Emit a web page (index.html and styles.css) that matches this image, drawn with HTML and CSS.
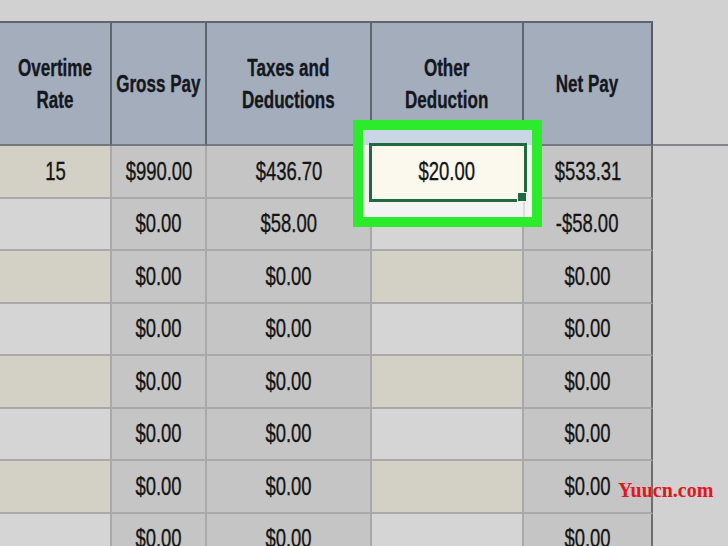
FILE: index.html
```html
<!DOCTYPE html>
<html lang="en">
<head>
<meta charset="utf-8">
<title>Payroll sheet</title>
<link rel="stylesheet" href="styles.css">
</head>
<body>
<div class="page">
  <div class="sheet">
    <div class="hd"><span class="t">Overtime<br>Rate</span></div>
    <div class="hd"><span class="t">Gross Pay</span></div>
    <div class="hd"><span class="t">Taxes and<br>Deductions</span></div>
    <div class="hd"><span class="t">Other<br>Deduction</span></div>
    <div class="hd hd-last"><span class="t">Net Pay</span></div>
    <div class="hd-fill"></div>

    <div class="c alt"><span class="t">15</span></div>
    <div class="c g"><span class="t">$990.00</span></div>
    <div class="c g"><span class="t">$436.70</span></div>
    <div class="c sel"><span class="t">$20.00</span></div>
    <div class="c g last"><span class="t">$533.31</span></div>
    <div class="fill"></div>

    <div class="c lt"></div>
    <div class="c g"><span class="t">$0.00</span></div>
    <div class="c g"><span class="t">$58.00</span></div>
    <div class="c lt"></div>
    <div class="c g last"><span class="t">-$58.00</span></div>
    <div class="fill"></div>

    <div class="c alt"></div>
    <div class="c g"><span class="t">$0.00</span></div>
    <div class="c g"><span class="t">$0.00</span></div>
    <div class="c alt"></div>
    <div class="c g last"><span class="t">$0.00</span></div>
    <div class="fill"></div>

    <div class="c lt"></div>
    <div class="c g"><span class="t">$0.00</span></div>
    <div class="c g"><span class="t">$0.00</span></div>
    <div class="c lt"></div>
    <div class="c g last"><span class="t">$0.00</span></div>
    <div class="fill"></div>

    <div class="c alt"></div>
    <div class="c g"><span class="t">$0.00</span></div>
    <div class="c g"><span class="t">$0.00</span></div>
    <div class="c alt"></div>
    <div class="c g last"><span class="t">$0.00</span></div>
    <div class="fill"></div>

    <div class="c lt"></div>
    <div class="c g"><span class="t">$0.00</span></div>
    <div class="c g"><span class="t">$0.00</span></div>
    <div class="c lt"></div>
    <div class="c g last"><span class="t">$0.00</span></div>
    <div class="fill"></div>

    <div class="c alt"></div>
    <div class="c g"><span class="t">$0.00</span></div>
    <div class="c g"><span class="t">$0.00</span></div>
    <div class="c alt"></div>
    <div class="c g last"><span class="t">$0.00</span></div>
    <div class="fill"></div>

    <div class="c lt"></div>
    <div class="c g"><span class="t">$0.00</span></div>
    <div class="c g"><span class="t">$0.00</span></div>
    <div class="c lt"></div>
    <div class="c g last"><span class="t">$0.00</span></div>
    <div class="fill"></div>
  </div>
  <div class="spot"></div>
  <div class="mark">Yuucn.com</div>
</div>
</body>
</html>
```

FILE: styles.css
```css
* { box-sizing: border-box; }
html, body {
  margin: 0;
  padding: 0;
  background: #d1d1d1;
}
body {
  width: 728px;
  height: 546px;
  overflow: hidden;
  font-family: "Liberation Sans", Arial, sans-serif;
  color: #141414;
}
.page {
  position: relative;
  padding-top: 21px;
  height: 546px;
  overflow: hidden;
}
.sheet {
  display: grid;
  grid-template-columns: 112px 95px 165px 152px 129px 1fr;
  grid-template-rows: 125px repeat(8, 52.5px);
}
.t {
  display: inline-block;
  transform: scaleX(0.71);
  transform-origin: center;
  white-space: nowrap;
  -webkit-text-stroke: 0.35px currentColor;
}
.hd {
  background: #a3adbc;
  border-top: 2px solid #5f6670;
  border-right: 2px solid #5f6670;
  border-bottom: 2px solid #747980;
  display: flex;
  align-items: center;
  justify-content: center;
  text-align: center;
  font-weight: bold;
  font-size: 24px;
  line-height: 32px;
  color: #14171d;
}
.hd-last { border-right-color: #5a5e64; }
.hd-fill {
  border-bottom: 2px solid #85878a;
}
.c {
  display: flex;
  align-items: center;
  justify-content: center;
  font-size: 26px;
  border-right: 2px solid #a9a9a9;
  border-bottom: 2px solid #a9a9a9;
}
.alt { background: #d3d1c5; }
.lt { background: #d5d5d5; }
.g { background: #c5c5c5; }
.last { border-right-color: #6c6e71; }
.fill { background: #d1d1d1; }
.sel {
  position: relative;
  z-index: 3;
  background: #fbf8ee;
  outline: 3px solid #1f6a40;
  border-color: transparent;
}
.sel::after {
  content: "";
  position: absolute;
  right: -5px;
  bottom: -5px;
  width: 8px;
  height: 8px;
  background: #1f6a40;
  border: 1px solid #f4f4f4;
}
.spot {
  position: absolute;
  z-index: 2;
  left: 353px;
  top: 120px;
  width: 189px;
  height: 107px;
  border: 10px solid #2ceb2c;
  background:
    linear-gradient(90deg, transparent 160px, #dcdcdc 160px, #dcdcdc 162px, transparent 162px) 0 70px / 100% 17px no-repeat,
    linear-gradient(#cad6e3 0 15px, #f3f3f3 15px);
}
.mark {
  position: absolute;
  z-index: 4;
  left: 618px;
  top: 480px;
  font-family: "Liberation Serif", "Times New Roman", serif;
  font-weight: bold;
  font-size: 20px;
  line-height: 20px;
  color: #e3161c;
}
```
